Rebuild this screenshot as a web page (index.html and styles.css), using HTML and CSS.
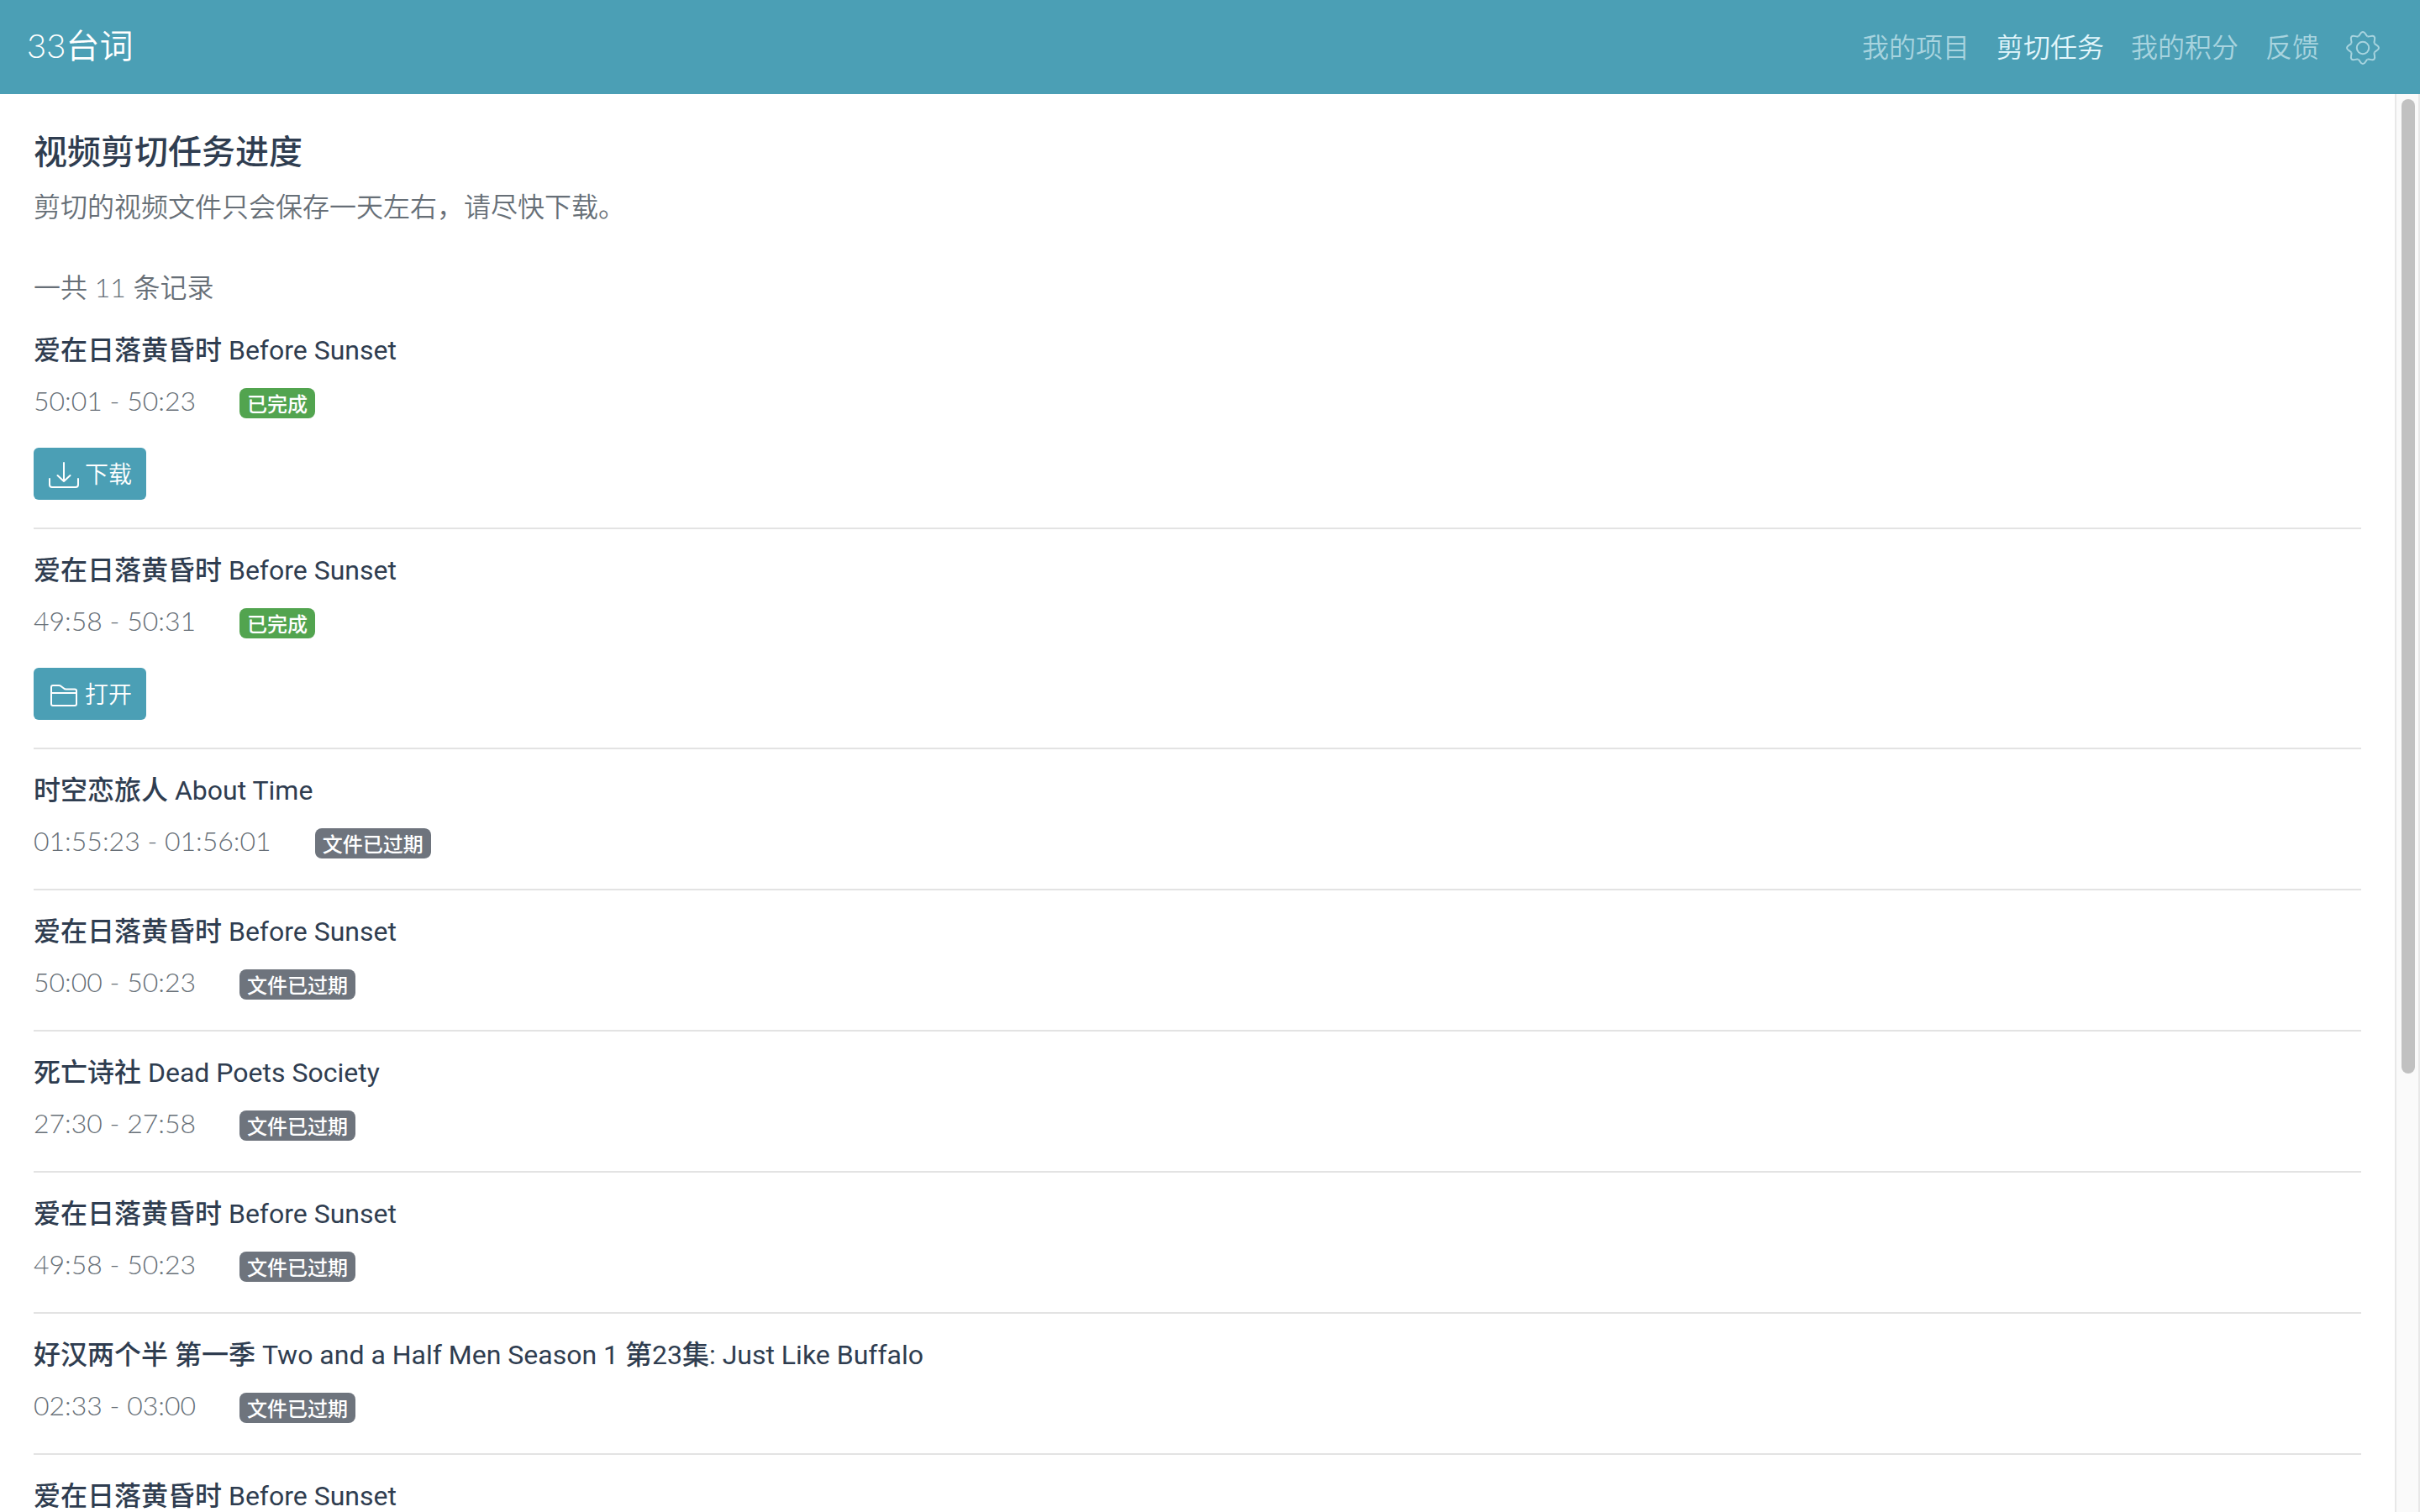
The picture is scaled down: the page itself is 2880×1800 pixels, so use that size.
FILE: index.html
```html
<!DOCTYPE html>
<html lang="zh-CN">
<head>
<meta charset="utf-8">
<meta name="viewport" content="width=device-width, initial-scale=1">
<title>33台词 - 剪切任务</title>
<link rel="stylesheet" href="styles.css">
</head>
<body>
<header class="navbar">
  <a class="brand" href="#">33台词</a>
  <nav class="nav">
    <a class="nav-link" href="#">我的项目</a>
    <a class="nav-link active" href="#" aria-current="page">剪切任务</a>
    <a class="nav-link" href="#">我的积分</a>
    <a class="nav-link" href="#">反馈</a>
    <button class="nav-gear" type="button" aria-label="设置">
      <svg class="icon" viewBox="-20 -20 40 40" fill="none" stroke="currentColor" stroke-width="2">
        <defs><path id="tooth" d="M-5.66,-13.67C-3.2,-14.7 -3.2,-19 0,-19S3.2,-14.7 5.66,-13.67"/></defs>
        <circle r="7.2"/>
        <use href="#tooth"/>
        <use href="#tooth" transform="rotate(45)"/>
        <use href="#tooth" transform="rotate(90)"/>
        <use href="#tooth" transform="rotate(135)"/>
        <use href="#tooth" transform="rotate(180)"/>
        <use href="#tooth" transform="rotate(225)"/>
        <use href="#tooth" transform="rotate(270)"/>
        <use href="#tooth" transform="rotate(315)"/>
      </svg>
    </button>
  </nav>
</header>
<div class="view">
  <main class="content">
    <h1 class="heading">视频剪切任务进度</h1>
    <p class="hint">剪切的视频文件只会保存一天左右，请尽快下载。</p>
    <p class="count">一共 11 条记录</p>
    <ul class="tasks">
      <li class="task">
        <h2 class="task-title">爱在日落黄昏时 Before Sunset</h2>
        <div class="task-info"><span class="time">50:01 - 50:23</span><span class="badge done">已完成</span></div>
        <button class="btn" type="button">
          <svg class="icon" viewBox="0 0 40 40" fill="none" stroke="currentColor" stroke-width="2" stroke-linecap="round" stroke-linejoin="round"><path d="M20 7V29M12.500 22L20 29L27.500 22M3 26V33Q3 36 6 36H34Q37 36 37 33V26"/></svg>
          下载
        </button>
      </li>
      <li class="task">
        <h2 class="task-title">爱在日落黄昏时 Before Sunset</h2>
        <div class="task-info"><span class="time">49:58 - 50:31</span><span class="badge done">已完成</span></div>
        <button class="btn" type="button">
          <svg class="icon" viewBox="0 0 40 40" fill="none" stroke="currentColor" stroke-width="2" stroke-linejoin="round"><path d="M5 19V12Q5 10 7 10H14Q15.500 10 17 11.200L20 13.500Q21 14.500 22.500 14.500H33Q35 14.500 35 16.500V32Q35 34 33 34H7Q5 34 5 32V19H35"/></svg>
          打开
        </button>
      </li>
      <li class="task">
        <h2 class="task-title">时空恋旅人 About Time</h2>
        <div class="task-info"><span class="time">01:55:23 - 01:56:01</span><span class="badge">文件已过期</span></div>
      </li>
      <li class="task">
        <h2 class="task-title">爱在日落黄昏时 Before Sunset</h2>
        <div class="task-info"><span class="time">50:00 - 50:23</span><span class="badge">文件已过期</span></div>
      </li>
      <li class="task">
        <h2 class="task-title">死亡诗社 Dead Poets Society</h2>
        <div class="task-info"><span class="time">27:30 - 27:58</span><span class="badge">文件已过期</span></div>
      </li>
      <li class="task">
        <h2 class="task-title">爱在日落黄昏时 Before Sunset</h2>
        <div class="task-info"><span class="time">49:58 - 50:23</span><span class="badge">文件已过期</span></div>
      </li>
      <li class="task">
        <h2 class="task-title">好汉两个半 第一季 Two and a Half Men Season 1 第23集: Just Like Buffalo</h2>
        <div class="task-info"><span class="time">02:33 - 03:00</span><span class="badge">文件已过期</span></div>
      </li>
      <li class="task">
        <h2 class="task-title">爱在日落黄昏时 Before Sunset</h2>
      </li>
    </ul>
  </main>
  <div class="scrollbar"><div class="thumb"></div></div>
</div>
</body>
</html>
```

FILE: styles.css
```css
* {
  box-sizing: border-box;
}

body {
  margin: 0;
  height: 100vh;
  display: flex;
  flex-direction: column;
  overflow: hidden;
  background: #fff;
  color: #676f77;
  font-family: Lato, "Noto Sans CJK SC DemiLight", "Noto Sans CJK SC", sans-serif;
  font-size: 32px;
  font-weight: 300;
  line-height: 48px;
}

h1, h2, p, ul {
  margin: 0;
  padding: 0;
}

button {
  font: inherit;
  border: 0;
  cursor: pointer;
}

.icon {
  display: block;
  width: 40px;
  height: 40px;
}

/* Top bar */
.navbar {
  flex: none;
  display: flex;
  align-items: center;
  justify-content: space-between;
  padding: 24px 48px 24px 32px;
  background: #4b9fb5;
}

.brand {
  color: #fff;
  font-size: 40px;
  line-height: 60px;
  padding-bottom: 4px;
  text-decoration: none;
}

.nav {
  display: flex;
  align-items: center;
  gap: 32px;
}

.nav-link,
.nav-gear {
  color: #a8d4df;
  text-decoration: none;
}

.nav-link.active {
  color: #e2f6fb;
}

.nav-gear {
  padding: 2px 0 0;
  background: none;
}

/* Page body */
.view {
  flex: 1;
  min-height: 0;
  display: flex;
}

.content {
  flex: 1;
  min-width: 0;
  padding: 46px 40px 0;
  overflow: hidden;
}

.heading,
.task-title {
  color: #2f3d50;
  font-family: Roboto, "Noto Sans CJK SC Medium", "Noto Sans CJK SC", sans-serif;
  font-size: 32px;
  font-weight: 400;
}

.heading {
  font-size: 40px;
}

.hint {
  margin-top: 16px;
}

.count {
  margin-top: 48px;
}

/* Task list */
.tasks {
  margin-top: 2px;
  list-style: none;
}

.task {
  padding: 25px 0 33px;
  border-bottom: 2px solid #e3e3e3;
}

.task-info {
  display: flex;
  align-items: flex-start;
  gap: 52px;
  margin-top: 12px;
}

.badge {
  margin-top: 9px;
  padding: 0 9px;
  border-radius: 8px;
  background: #6e747d;
  color: #fff;
  font-family: "Noto Sans CJK SC Medium", "Noto Sans CJK SC", sans-serif;
  font-size: 24px;
  font-weight: 500;
  line-height: 36px;
}

.badge.done {
  background: #52a44f;
}

.btn {
  display: flex;
  align-items: center;
  gap: 5px;
  margin-top: 32px;
  padding: 10px 17px 10px 16px;
  border-radius: 6px;
  background: #4b9fb5;
  color: #fff;
  font-size: 28px;
  line-height: 42px;
}

/* Scroll track */
.scrollbar {
  flex: none;
  width: 30px;
  padding: 6px;
  border: solid #e8e8e8;
  border-width: 0 2px;
  background: #fafafa;
}

.thumb {
  width: 16px;
  height: 69.2%;
  border-radius: 8px;
  background: #c1c1c1;
}
```
